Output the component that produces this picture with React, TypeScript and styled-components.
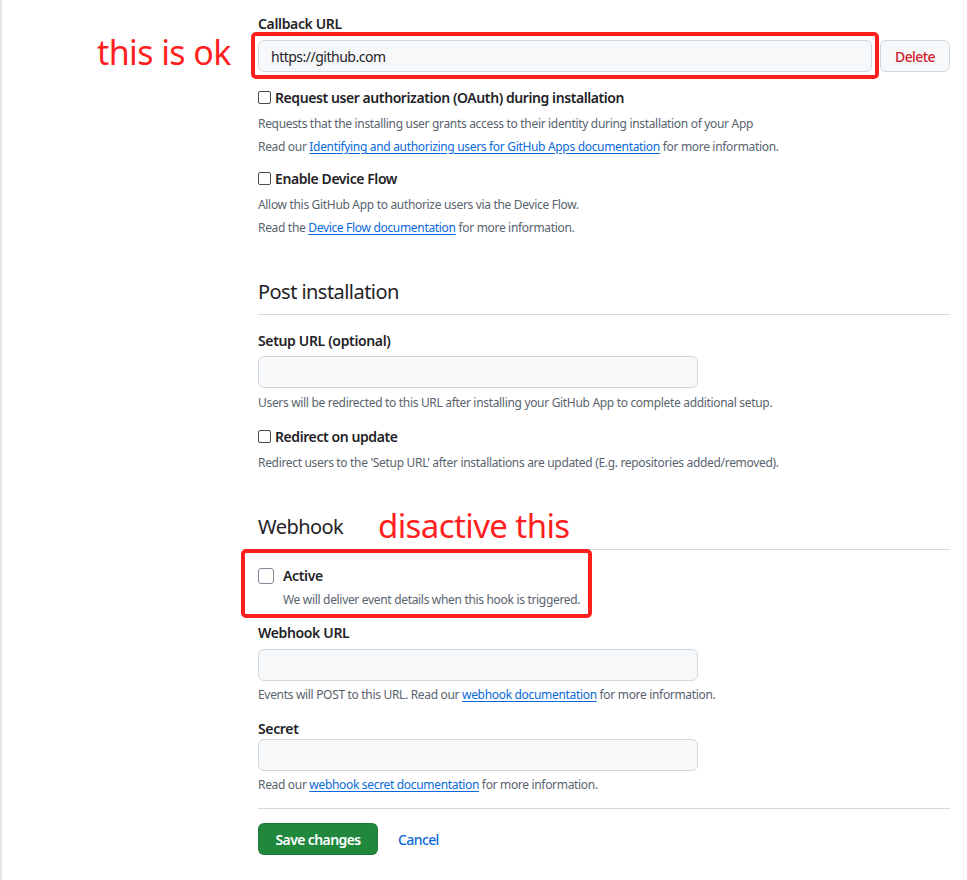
import React from "react";
import styled, { createGlobalStyle } from "styled-components";

const Global = createGlobalStyle`
  html, body { margin: 0; padding: 0; background: #ffffff; }
  body { font-family: "Noto Sans", "Segoe UI", sans-serif; color: #1f2328; }
  * { box-sizing: border-box; }
`;

const Page = styled.div`
  position: relative;
  width: 964px;
  height: 880px;
  border-left: 2px solid #e8e8e8;
  border-right: 1px solid #f0f0f0;
  overflow: hidden;
`;

const Column = styled.div`
  margin-left: 256px;
  width: 692px;
  padding-top: 13px;
  display: flex;
  flex-direction: column;
`;

const Label = styled.div<{ $mt?: number }>`
  font-size: 14px;
  font-weight: 600;
  line-height: 21px;
  letter-spacing: -0.35px;
  margin-top: ${(p) => p.$mt ?? 0}px;
`;

const InputRow = styled.div<{ $mt?: number }>`
  display: flex;
  gap: 8px;
  margin-top: ${(p) => p.$mt ?? 6}px;
`;

const TextInput = styled.div<{ $w?: number }>`
  width: ${(p) => (p.$w ? `${p.$w}px` : "auto")};
  flex: ${(p) => (p.$w ? "none" : "1")};
  height: 32px;
  border: 1px solid #d1d9e0;
  border-radius: 6px;
  background: #f6f8fa;
  padding: 0 12px;
  display: flex;
  align-items: center;
  font-size: 14px;
  letter-spacing: -0.5px;
  color: #1f2328;
`;

const DeleteButton = styled.button`
  height: 32px;
  width: 70px;
  border: 1px solid #d1d9e0;
  border-radius: 6px;
  background: #f6f8fa;
  color: #d1242f;
  font-family: inherit;
  font-size: 14px;
  font-weight: 500;
  letter-spacing: -0.6px;
  padding: 0;
`;

const CheckRow = styled.div<{ $mt?: number }>`
  display: flex;
  align-items: center;
  gap: 4px;
  margin-top: ${(p) => p.$mt ?? 15}px;
  font-size: 14px;
  font-weight: 600;
  line-height: 21px;
  letter-spacing: -0.42px;
`;

const Box = styled.span`
  width: 13px;
  height: 13px;
  border: 1px solid #4a4a4a;
  border-radius: 2px;
  background: #fff;
  flex: none;
`;

const Note = styled.div<{ $mt?: number; $indent?: number }>`
  font-size: 12px;
  line-height: 18px;
  letter-spacing: -0.32px;
  color: #59636e;
  margin-top: ${(p) => p.$mt ?? 5}px;
  padding-left: ${(p) => p.$indent ?? 0}px;
`;

const Link = styled.a`
  color: #0969da;
  text-decoration: underline;
  text-underline-offset: 2px;
`;

const Subhead = styled.div<{ $mt?: number }>`
  margin-top: ${(p) => p.$mt ?? 40}px;
  padding-bottom: 7px;
  border-bottom: 1px solid #d1d9e0;
  font-size: 20px;
  font-weight: 400;
  line-height: 30px;
  letter-spacing: -0.55px;
`;

const ActiveRow = styled.div`
  display: flex;
  align-items: center;
  gap: 9px;
  margin-top: 15px;
  font-size: 14px;
  font-weight: 600;
  line-height: 21px;
  letter-spacing: -0.35px;
`;

const BigBox = styled.span`
  width: 16px;
  height: 16px;
  border: 1px solid #818b98;
  border-radius: 3px;
  background: #fff;
  flex: none;
`;

const Divider = styled.div<{ $mt?: number }>`
  margin-top: ${(p) => p.$mt ?? 14}px;
  border-top: 1px solid #d1d9e0;
`;

const Actions = styled.div`
  display: flex;
  align-items: center;
  gap: 20px;
  margin-top: 14px;
`;

const SaveButton = styled.button`
  height: 32px;
  width: 120px;
  padding: 0;
  border: 1px solid rgba(31, 35, 40, 0.15);
  border-radius: 6px;
  background: #1f883d;
  color: #fff;
  font-family: inherit;
  font-size: 14px;
  font-weight: 600;
  letter-spacing: -0.6px;
`;

const CancelLink = styled.a`
  color: #0969da;
  font-size: 14px;
  font-weight: 500;
  letter-spacing: -0.6px;
  text-decoration: none;
`;

const Annotation = styled.div<{ $x: number; $y: number; $size: number }>`
  position: absolute;
  left: ${(p) => p.$x}px;
  top: ${(p) => p.$y}px;
  color: #ff1f1f;
  font-size: ${(p) => p.$size}px;
  line-height: 1;
  letter-spacing: -0.6px;
  white-space: nowrap;
`;

const RedBox = styled.div<{ $x: number; $y: number; $w: number; $h: number }>`
  position: absolute;
  left: ${(p) => p.$x}px;
  top: ${(p) => p.$y}px;
  width: ${(p) => p.$w}px;
  height: ${(p) => p.$h}px;
  border: 4px solid #ff1f1f;
  border-radius: 5px;
`;

export default function App() {
  return (
    <>
      <Global />
      <Page>
        <Column>
          <Label>Callback URL</Label>
          <InputRow>
            <TextInput>https://github.com</TextInput>
            <DeleteButton>Delete</DeleteButton>
          </InputRow>

          <CheckRow>
            <Box />
            Request user authorization (OAuth) during installation
          </CheckRow>
          <Note $mt={7}>
            Requests that the installing user grants access to their identity during installation of your App
          </Note>
          <Note>
            Read our <Link>Identifying and authorizing users for GitHub Apps documentation</Link> for more information.
          </Note>

          <CheckRow $mt={12}>
            <Box />
            Enable Device Flow
          </CheckRow>
          <Note $mt={7}>Allow this GitHub App to authorize users via the Device Flow.</Note>
          <Note>
            Read the <Link>Device Flow documentation</Link> for more information.
          </Note>

          <Subhead>Post installation</Subhead>

          <Label $mt={15}>Setup URL (optional)</Label>
          <InputRow $mt={5}>
            <TextInput $w={440} />
          </InputRow>
          <Note $mt={6}>
            Users will be redirected to this URL after installing your GitHub App to complete additional setup.
          </Note>
          <CheckRow $mt={14}>
            <Box />
            Redirect on update
          </CheckRow>
          <Note $mt={7}>
            Redirect users to the 'Setup URL' after installations are updated (E.g. repositories added/removed).
          </Note>

          <Subhead $mt={40}>Webhook</Subhead>

          <ActiveRow>
            <BigBox />
            Active
          </ActiveRow>
          <Note $mt={5} $indent={25}>
            We will deliver event details when this hook is triggered.
          </Note>

          <Label $mt={13}>Webhook URL</Label>
          <InputRow>
            <TextInput $w={440} />
          </InputRow>
          <Note $mt={5}>
            Events will POST to this URL. Read our <Link>webhook documentation</Link> for more information.
          </Note>

          <Label $mt={14}>Secret</Label>
          <InputRow $mt={0}>
            <TextInput $w={440} />
          </InputRow>
          <Note $mt={5}>
            Read our <Link>webhook secret documentation</Link> for more information.
          </Note>

          <Divider $mt={14} />
          <Actions>
            <SaveButton>Save changes</SaveButton>
            <CancelLink>Cancel</CancelLink>
          </Actions>
        </Column>

        <Annotation $x={95} $y={35} $size={34}>this is ok</Annotation>
        <RedBox $x={249} $y={32} $w={628} $h={47} />
        <Annotation $x={376} $y={509} $size={33}>disactive this</Annotation>
        <RedBox $x={239} $y={549} $w={351} $h={69} />
      </Page>
    </>
  );
}
